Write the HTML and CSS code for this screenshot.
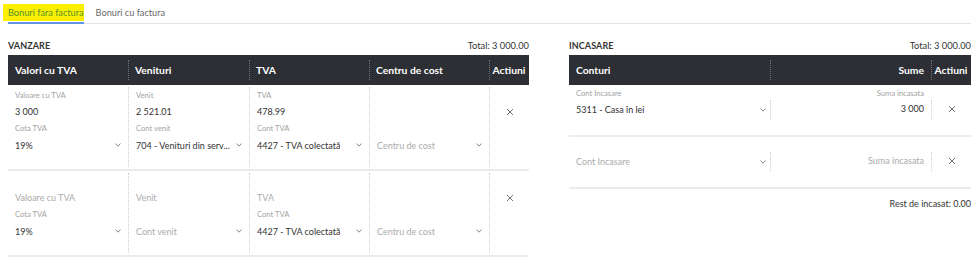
FILE: index.html
```html
<!DOCTYPE html>
<html>
<head>
<meta charset="utf-8">
<link rel="stylesheet" href="styles.css">
</head>
<body>
<div class="tabs">
  <div class="tab active"><mark class="hl">Bonuri fara factura</mark></div>
  <div class="tab">Bonuri cu factura</div>
</div>

<div class="panels">
  <section class="panel">
    <div class="panel-head"><span class="title">VANZARE</span><span class="total">Total: 3 000.00</span></div>
    <div class="ltable">
      <div class="lhead">
        <div class="hc">Valori cu TVA</div>
        <div class="hc div">Venituri</div>
        <div class="hc div">TVA</div>
        <div class="hc div">Centru de cost</div>
        <div class="hc div center">Actiuni</div>
      </div>
      <div class="lrow">
        <div class="lc">
          <div class="lbl">Valoare cu TVA</div>
          <div class="val">3 000</div>
          <div class="lbl">Cota TVA</div>
          <div class="sel"><span>19%</span><svg class="chev" viewBox="0 0 6 4"><polyline points="0.5,0.5 3,3.2 5.5,0.5"/></svg></div>
        </div>
        <div class="lc div">
          <div class="lbl">Venit</div>
          <div class="val">2 521.01</div>
          <div class="lbl">Cont venit</div>
          <div class="sel"><span>704 - Venituri din serv...</span><svg class="chev" viewBox="0 0 6 4"><polyline points="0.5,0.5 3,3.2 5.5,0.5"/></svg></div>
        </div>
        <div class="lc div">
          <div class="lbl">TVA</div>
          <div class="val">478.99</div>
          <div class="lbl">Cont TVA</div>
          <div class="sel"><span>4427 - TVA colectată</span><svg class="chev" viewBox="0 0 6 4"><polyline points="0.5,0.5 3,3.2 5.5,0.5"/></svg></div>
        </div>
        <div class="lc div">
          <div class="lbl"></div>
          <div class="val"></div>
          <div class="lbl"></div>
          <div class="sel ph"><span>Centru de cost</span><svg class="chev" viewBox="0 0 6 4"><polyline points="0.5,0.5 3,3.2 5.5,0.5"/></svg></div>
        </div>
        <div class="lc div act">
          <div class="lbl"></div>
          <div class="val x"><svg class="close" viewBox="0 0 8 8"><path d="M1 1L7 7M7 1L1 7"/></svg></div>
        </div>
      </div>
      <div class="lrow">
        <div class="lc">
          <div class="lbl"></div>
          <div class="val ph">Valoare cu TVA</div>
          <div class="lbl">Cota TVA</div>
          <div class="sel"><span>19%</span><svg class="chev" viewBox="0 0 6 4"><polyline points="0.5,0.5 3,3.2 5.5,0.5"/></svg></div>
        </div>
        <div class="lc div">
          <div class="lbl"></div>
          <div class="val ph">Venit</div>
          <div class="lbl"></div>
          <div class="sel ph"><span>Cont venit</span><svg class="chev" viewBox="0 0 6 4"><polyline points="0.5,0.5 3,3.2 5.5,0.5"/></svg></div>
        </div>
        <div class="lc div">
          <div class="lbl"></div>
          <div class="val ph">TVA</div>
          <div class="lbl">Cont TVA</div>
          <div class="sel"><span>4427 - TVA colectată</span><svg class="chev" viewBox="0 0 6 4"><polyline points="0.5,0.5 3,3.2 5.5,0.5"/></svg></div>
        </div>
        <div class="lc div">
          <div class="lbl"></div>
          <div class="val"></div>
          <div class="lbl"></div>
          <div class="sel ph"><span>Centru de cost</span><svg class="chev" viewBox="0 0 6 4"><polyline points="0.5,0.5 3,3.2 5.5,0.5"/></svg></div>
        </div>
        <div class="lc div act">
          <div class="lbl"></div>
          <div class="val x"><svg class="close" viewBox="0 0 8 8"><path d="M1 1L7 7M7 1L1 7"/></svg></div>
        </div>
      </div>
    </div>
  </section>

  <section class="panel">
    <div class="panel-head"><span class="title">INCASARE</span><span class="total">Total: 3 000.00</span></div>
    <div class="rtable">
      <div class="rhead">
        <div class="hc">Conturi</div>
        <div class="hc div right">Sume</div>
        <div class="hc div center">Actiuni</div>
      </div>
      <div class="rrow">
        <div class="lbl left">Cont Incasare</div>
        <div class="lbl right">Suma incasata</div>
        <div class="lbl"></div>
        <div class="sel rsel"><span>5311 - Casa în lei</span><svg class="chev" viewBox="0 0 6 4"><polyline points="0.5,0.5 3,3.2 5.5,0.5"/></svg></div>
        <div class="val amt">3 000</div>
        <div class="val x xdiv"><svg class="close" viewBox="0 0 8 8"><path d="M1 1L7 7M7 1L1 7"/></svg></div>
      </div>
      <div class="rrow">
        <div class="lbl"></div>
        <div class="lbl"></div>
        <div class="lbl"></div>
        <div class="sel rsel ph"><span>Cont Incasare</span><svg class="chev" viewBox="0 0 6 4"><polyline points="0.5,0.5 3,3.2 5.5,0.5"/></svg></div>
        <div class="val amt ph">Suma incasata</div>
        <div class="val x xdiv"><svg class="close" viewBox="0 0 8 8"><path d="M1 1L7 7M7 1L1 7"/></svg></div>
      </div>
    </div>
    <div class="rest">Rest de incasat: 0.00</div>
  </section>
</div>
</body>
</html>
```

FILE: styles.css
```css
* { box-sizing: border-box; }
html, body { margin: 0; padding: 0; background: #fff; }
body {
  font-family: Lato, "Open Sans", sans-serif;
  color: #333;
  font-size: 9px;
  padding: 0 4px 0 8px;
}

.tabs {
  display: flex;
  gap: 12px;
  height: 24px;
  border-bottom: 1px solid #e3e3e3;
  align-items: stretch;
}
.tab {
  font-size: 9.2px;
  color: #666;
  display: flex;
  align-items: center;
  padding-top: 2px;
  border-bottom: 2px solid transparent;
  margin-bottom: -1px;
}
.tab.active {
  border-bottom-color: #6195e6;
}
.hl {
  background: #fcf000;
  color: #55902c;
  padding: 3px 0 3px 5px;
  margin-left: -5px;
}

.panels {
  display: grid;
  grid-template-columns: 521px 402px;
  column-gap: 40px;
  margin-top: 13px;
}
.panel-head {
  display: flex;
  justify-content: space-between;
  align-items: center;
  height: 17px;
  margin-bottom: 1px;
}
.title { font-weight: 700; font-size: 9px; color: #333; letter-spacing: 0.1px; }
.total { font-size: 9.3px; color: #333; }

.lhead, .rhead {
  display: grid;
  height: 30px;
  background: #2d2f35;
  color: #fff;
}
.lhead, .lrow { grid-template-columns: 120px 121px 120px 120px 40px; }
.rhead, .rrow { grid-template-columns: 201px 161px 40px; }

.hc {
  position: relative;
  display: flex;
  align-items: center;
  padding: 0 7px;
  font-weight: 700;
  font-size: 10.3px;
  white-space: nowrap;
}
.hc.div::before {
  content: "";
  position: absolute;
  left: 0;
  top: 5px;
  bottom: 5px;
  border-left: 1px dotted #6d7077;
}
.hc.center { justify-content: center; padding: 0; }
.hc.right { justify-content: flex-end; }

.lrow {
  display: grid;
  border-bottom: 2px solid #ececec;
}
.lc {
  padding: 1px 7px 13px 7px;
  margin: 2px 0 2px 0;
  min-width: 0;
}
.lc.div { border-left: 1px dotted #cfcfcf; }
.lc.act { padding: 1px 0 13px 0; }

.lbl {
  height: 16px;
  line-height: 14px;
  font-size: 7.6px;
  color: #a3a3a3;
  white-space: nowrap;
}
.lbl.left { padding-left: 7px; }
.lbl.right { text-align: right; padding-right: 7px; }
.val {
  height: 17px;
  line-height: 15px;
  font-size: 9px;
  color: #333;
  white-space: nowrap;
}
.val.ph, .sel.ph { color: #ababab; }
.sel {
  height: 17px;
  display: flex;
  align-items: center;
  justify-content: space-between;
  font-size: 9px;
  color: #333;
  white-space: nowrap;
  padding-bottom: 1px;
}
.sel span { overflow: hidden; }
.chev {
  width: 6px;
  height: 4px;
  fill: none;
  stroke: #888;
  stroke-width: 1;
  flex: none;
}
.x {
  display: flex;
  justify-content: center;
  align-items: center;
  padding-bottom: 2px;
}
.close {
  width: 8px;
  height: 8px;
  stroke: #707070;
  stroke-width: 1;
  fill: none;
}

.rrow {
  display: grid;
  border-bottom: 2px solid #ececec;
  padding: 1px 0 15px;
}
.rsel { padding: 0 4px 1px 7px; height: 20px; margin-top: -2px; }
.amt {
  border-left: 1px dotted #d0d0d0;
  text-align: right;
  padding-right: 7px;
  height: 20px;
  line-height: 17px;
  margin-top: -2px;
}
.xdiv {
  border-left: 1px dotted #d0d0d0;
  height: 20px;
  margin-top: -2px;
}

.rest {
  text-align: right;
  font-size: 9px;
  color: #333;
  margin-top: 9px;
}
```
